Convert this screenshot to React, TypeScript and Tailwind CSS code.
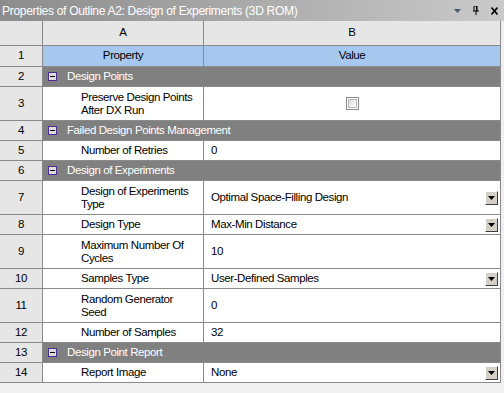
import React from "react";

type Row =
  | { n: number; kind: "cat"; label: string }
  | {
      n: number;
      kind: "prop";
      label: React.ReactNode;
      value?: string;
      dropdown?: boolean;
      checkbox?: boolean;
      tall?: boolean;
    };

const rows: Row[] = [
  { n: 2, kind: "cat", label: "Design Points" },
  { n: 3, kind: "prop", label: <>Preserve Design Points<br />After DX Run</>, checkbox: true, tall: true },
  { n: 4, kind: "cat", label: "Failed Design Points Management" },
  { n: 5, kind: "prop", label: "Number of Retries", value: "0" },
  { n: 6, kind: "cat", label: "Design of Experiments" },
  { n: 7, kind: "prop", label: <>Design of Experiments<br />Type</>, value: "Optimal Space-Filling Design", dropdown: true, tall: true },
  { n: 8, kind: "prop", label: "Design Type", value: "Max-Min Distance", dropdown: true },
  { n: 9, kind: "prop", label: <>Maximum Number Of<br />Cycles</>, value: "10", tall: true },
  { n: 10, kind: "prop", label: "Samples Type", value: "User-Defined Samples", dropdown: true },
  { n: 11, kind: "prop", label: <>Random Generator<br />Seed</>, value: "0", tall: true },
  { n: 12, kind: "prop", label: "Number of Samples", value: "32" },
  { n: 13, kind: "cat", label: "Design Point Report" },
  { n: 14, kind: "prop", label: "Report Image", value: "None", dropdown: true },
];

function Minus() {
  return (
    <div className="w-[9px] h-[9px] border border-[#4b2d8f] bg-[#dcdcdc] flex items-center justify-center shrink-0">
      <div className="w-[5px] h-[1px] bg-black" />
    </div>
  );
}

function DropBtn() {
  return (
    <div className="w-[13px] h-[14px] bg-[#d4d0c8] border-t border-l border-t-white border-l-white border-r border-b border-r-[#404040] border-b-[#404040] flex items-center justify-center shrink-0">
      <svg width="7" height="4" viewBox="0 0 7 4">
        <path d="M0 0H7L3.5 4Z" fill="#000" />
      </svg>
    </div>
  );
}

function Checkbox() {
  return (
    <div className="w-[13px] h-[13px] border border-[#8a8a8a] bg-white p-[1px]">
      <div className="w-full h-full border border-[#b8b8b8] bg-gradient-to-br from-[#dcdcdc] to-[#ffffff]" />
    </div>
  );
}

export default function App() {
  return (
    <div
      className="w-[504px] h-[393px] bg-[#f0f0f0] text-[11.5px] tracking-[-0.4px] text-black overflow-hidden"
      style={{ fontFamily: '"Liberation Sans", Arial, sans-serif' }}
    >
      {/* Title bar */}
      <div className="h-[21px] flex items-center bg-gradient-to-r from-[#8c8c8c] to-[#cacaca] pl-[2px] pr-[6px]">
        <span className="text-white text-[12px] tracking-[-0.3px] flex-1 truncate">
          Properties of Outline A2: Design of Experiments (3D ROM)
        </span>
        <div className="flex items-center gap-[11px]">
          <svg width="7" height="4" viewBox="0 0 7 4">
            <path d="M0 0H7L3.5 4Z" fill="#4a5878" />
          </svg>
          <svg width="8" height="9" viewBox="0 0 8 9">
            <path d="M2 0V5M5 0V5M1 5H7M2 0H5M4 5V9" stroke="#000" strokeWidth="1" fill="none" />
            <rect x="4" y="0" width="1" height="5" fill="#000" />
          </svg>
          <svg width="7" height="8" viewBox="0 0 7 8">
            <path d="M0.5 0.5L6.5 7.5M6.5 0.5L0.5 7.5" stroke="#000" strokeWidth="1.6" />
          </svg>
        </div>
      </div>

      {/* Table */}
      <div className="w-[501px] border-r border-[#8a8a8a]">
        {/* Header row */}
        <div className="flex h-[25px] border-b border-[#8a8a8a] bg-[#e6e6e6]">
          <div className="w-[43px] shrink-0 border-r border-[#8a8a8a]" />
          <div className="w-[161px] shrink-0 border-r border-[#8a8a8a] flex items-center justify-center">A</div>
          <div className="flex-1 flex items-center justify-center">B</div>
        </div>
        {/* Row 1 */}
        <div className="flex h-[21px] border-b border-[#8a8a8a]">
          <div className="w-[43px] shrink-0 border-r border-[#8a8a8a] bg-[#e6e6e6] flex items-center justify-center">1</div>
          <div className="w-[161px] shrink-0 border-r border-[#8a8a8a] bg-[#a6c8ef] flex items-center justify-center">Property</div>
          <div className="flex-1 bg-[#a6c8ef] flex items-center justify-center">Value</div>
        </div>
        {rows.map((r) => (
          <div
            key={r.n}
            className={
              r.kind === "prop" && r.tall
                ? "flex h-[34px] border-b border-[#8a8a8a]"
                : "flex h-[20px] border-b border-[#8a8a8a]"
            }
          >
            <div className="w-[43px] shrink-0 border-r border-[#8a8a8a] bg-[#e6e6e6] flex items-center justify-center">
              {r.n}
            </div>
            {r.kind === "cat" ? (
              <div className="flex-1 bg-[#808080] flex items-center pl-[5px] gap-[10px] text-white">
                <Minus />
                <span>{r.label}</span>
              </div>
            ) : (
              <>
                <div className="w-[161px] shrink-0 border-r border-[#8a8a8a] bg-white flex items-center pl-[38px] leading-[13px]">
                  <span>{r.label}</span>
                </div>
                <div className="flex-1 bg-white flex items-center pl-[7px] pr-[2px]">
                  {r.checkbox ? (
                    <div className="flex-1 flex justify-center pr-[5px]">
                      <Checkbox />
                    </div>
                  ) : (
                    <>
                      <span className="flex-1">{r.value}</span>
                      {r.dropdown && <DropBtn />}
                    </>
                  )}
                </div>
              </>
            )}
          </div>
        ))}
      </div>
    </div>
  );
}
